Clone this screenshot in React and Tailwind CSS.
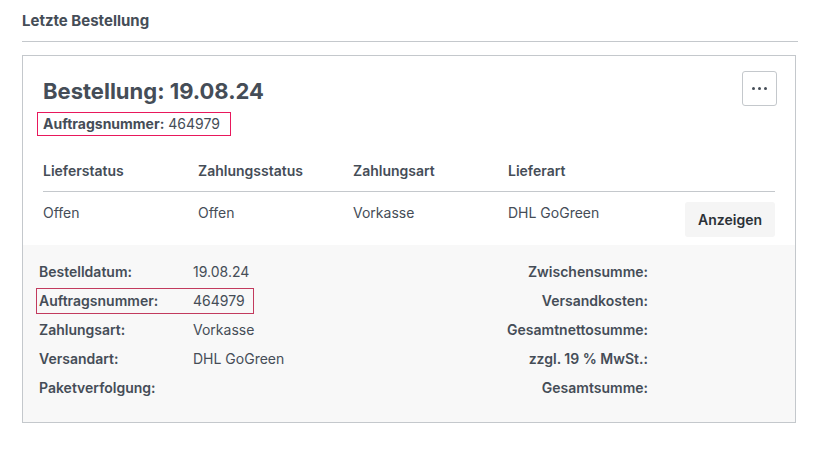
import React from "react";

const font = { fontFamily: "Inter, 'Noto Sans', sans-serif" };

const left = [
  ["Bestelldatum:", "19.08.24"],
  ["Auftragsnummer:", "464979"],
  ["Zahlungsart:", "Vorkasse"],
  ["Versandart:", "DHL GoGreen"],
  ["Paketverfolgung:", ""],
];
const right = ["Zwischensumme:", "Versandkosten:", "Gesamtnettosumme:", "zzgl. 19 % MwSt.:", "Gesamtsumme:"];

export default function App() {
  return (
    <div className="w-[820px] h-[453px] bg-white text-[#454d57] pt-[10px] px-[22px]" style={font}>
      {/* Section title */}
      <h2 className="text-[15px] font-bold leading-[22px] pb-[9px] border-b border-[#c4c8cc]">
        Letzte Bestellung
      </h2>

      {/* Card */}
      <div className="mt-[13px] w-[774px] border border-[#c4c8cc]">
        <div className="px-[20px] pt-[15px] pb-[8px]">
          <div className="flex items-start justify-between">
            <h1 className="text-[22px] font-bold leading-[34px] mt-[3px]">Bestellung: 19.08.24</h1>
            <button className="w-[35px] h-[35px] mr-[-2px] border border-[#c4c8cc] rounded-[3px] flex items-center justify-center gap-[3px]">
              <span className="w-[3px] h-[3px] rounded-full bg-[#454d57]" />
              <span className="w-[3px] h-[3px] rounded-full bg-[#454d57]" />
              <span className="w-[3px] h-[3px] rounded-full bg-[#454d57]" />
            </button>
          </div>
          <div className="mt-[4px] ml-[-6px] inline-block border border-[#e8185c] px-[5px] py-[2px] text-[14px] w-[194px] leading-[18px]">
            <span className="font-bold">Auftragsnummer:</span> 464979
          </div>

          <div className="mt-[24px] grid grid-cols-[155px_155px_155px_1fr] text-[14px] font-semibold pb-[10px] border-b border-[#c4c8cc]">
            <span>Lieferstatus</span>
            <span>Zahlungsstatus</span>
            <span>Zahlungsart</span>
            <span>Lieferart</span>
          </div>
          <div className="grid grid-cols-[155px_155px_155px_1fr_auto] text-[14px] pt-[10px]">
            <span>Offen</span>
            <span>Offen</span>
            <span>Vorkasse</span>
            <span>DHL GoGreen</span>
            <button className="w-[90px] h-[35px] rounded-[3px] bg-[#f5f5f5] text-[14px] font-semibold text-[#2b3137]">
              Anzeigen
            </button>
          </div>
        </div>

        {/* Summary */}
        <div className="bg-[#f8f8f8] px-[16px] pt-[17px] pb-[24px] grid grid-cols-2 text-[14px]">
          <div className="flex flex-col gap-[9px]">
            {left.map(([k, v], i) => (
              <div
                key={k}
                className={`flex leading-[20px] ${i === 1 ? "ml-[-3px] pl-[2px] w-[218px] border border-[#c23a5e] my-[-3px] py-[2px]" : ""}`}
              >
                <span className="w-[154px] font-semibold">{k}</span>
                <span>{v}</span>
              </div>
            ))}
          </div>
          <div className="flex flex-col gap-[9px] pr-[131px] items-end">
            {right.map((k) => (
              <span key={k} className="leading-[20px] font-semibold">{k}</span>
            ))}
          </div>
        </div>
      </div>
    </div>
  );
}
